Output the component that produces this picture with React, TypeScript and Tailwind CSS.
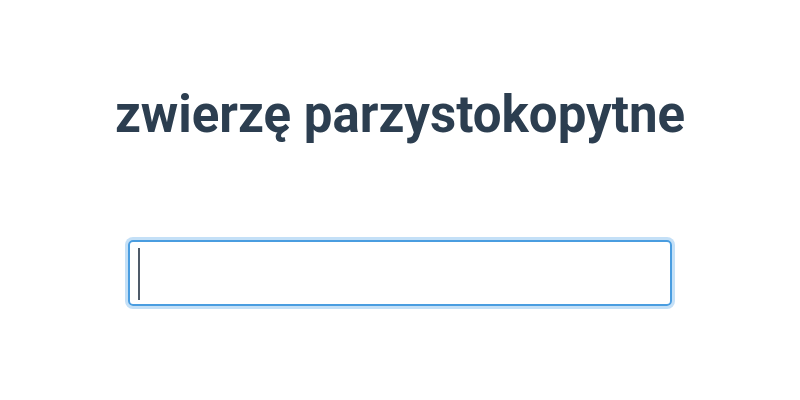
export default function App() {
  return (
    <div className="flex h-[400px] w-[800px] flex-col items-center bg-white font-['Roboto',sans-serif] text-[#2c3e50]">
      <h1 className="mt-[85px] text-[51px] font-bold leading-[60px]">zwierzę parzystokopytne</h1>
      <div className="relative mt-[95px]">
        <input
          type="text"
          className="h-[66px] w-[544px] rounded-[5px] border-2 border-[#4a9de0] px-[8px] text-[40px] text-[#2c3e50] outline-none ring-[3px] ring-[#c4e0f7]"
        />
        <span className="pointer-events-none absolute left-[10px] top-[8px] h-[52px] w-[2px] bg-[#4f5b69]" />
      </div>
    </div>
  );
}
